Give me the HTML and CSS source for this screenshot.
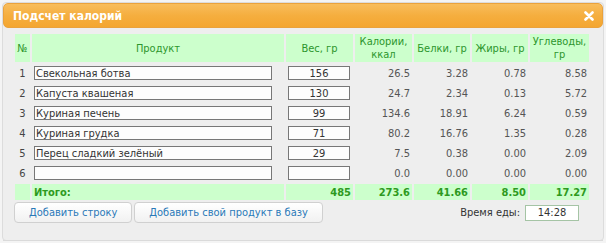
FILE: index.html
```html
<!DOCTYPE html>
<html lang="ru">
<head>
    <meta charset="UTF-8">
    <title>Подсчет калорий</title>
    <link rel="stylesheet" href="styles.css">
</head>
<body>
    <div class="dialog">
        <div class="titlebar">
            <span class="title">Подсчет калорий</span>
            <svg class="close" width="10" height="10" viewBox="0 0 10 10">
                <path d="M1.5 1.5 L8.5 8.5 M8.5 1.5 L1.5 8.5" stroke="#fff" stroke-width="2.6" stroke-linecap="round"/>
            </svg>
        </div>
        <div class="content">
            <table class="calc">
                <colgroup>
                    <col style="width: 15px">
                    <col style="width: 252px">
                    <col style="width: 67px">
                    <col style="width: 57px">
                    <col style="width: 56px">
                    <col style="width: 56px">
                    <col style="width: 59px">
                </colgroup>
                <thead>
                    <tr>
                        <th>№</th>
                        <th>Продукт</th>
                        <th>Вес, гр</th>
                        <th>Калории, ккал</th>
                        <th>Белки, гр</th>
                        <th>Жиры, гр</th>
                        <th>Углеводы, гр</th>
                    </tr>
                </thead>
                <tbody>
                    <tr>
                        <td class="num">1</td>
                        <td class="prod"><input type="text" class="name" value="Свекольная ботва"></td>
                        <td class="wt"><input type="text" class="weight" value="156"></td>
                        <td class="val">26.5</td>
                        <td class="val">3.28</td>
                        <td class="val">0.78</td>
                        <td class="val">8.58</td>
                    </tr>
                    <tr>
                        <td class="num">2</td>
                        <td class="prod"><input type="text" class="name" value="Капуста квашеная"></td>
                        <td class="wt"><input type="text" class="weight" value="130"></td>
                        <td class="val">24.7</td>
                        <td class="val">2.34</td>
                        <td class="val">0.13</td>
                        <td class="val">5.72</td>
                    </tr>
                    <tr>
                        <td class="num">3</td>
                        <td class="prod"><input type="text" class="name" value="Куриная печень"></td>
                        <td class="wt"><input type="text" class="weight" value="99"></td>
                        <td class="val">134.6</td>
                        <td class="val">18.91</td>
                        <td class="val">6.24</td>
                        <td class="val">0.59</td>
                    </tr>
                    <tr>
                        <td class="num">4</td>
                        <td class="prod"><input type="text" class="name" value="Куриная грудка"></td>
                        <td class="wt"><input type="text" class="weight" value="71"></td>
                        <td class="val">80.2</td>
                        <td class="val">16.76</td>
                        <td class="val">1.35</td>
                        <td class="val">0.28</td>
                    </tr>
                    <tr>
                        <td class="num">5</td>
                        <td class="prod"><input type="text" class="name" value="Перец сладкий зелёный"></td>
                        <td class="wt"><input type="text" class="weight" value="29"></td>
                        <td class="val">7.5</td>
                        <td class="val">0.38</td>
                        <td class="val">0.00</td>
                        <td class="val">2.09</td>
                    </tr>
                    <tr>
                        <td class="num">6</td>
                        <td class="prod"><input type="text" class="name" value=""></td>
                        <td class="wt"><input type="text" class="weight" value=""></td>
                        <td class="val">0.0</td>
                        <td class="val">0.00</td>
                        <td class="val">0.00</td>
                        <td class="val">0.00</td>
                    </tr>
                </tbody>
                <tfoot>
                    <tr class="total">
                        <td></td>
                        <td class="label">Итого:</td>
                        <td class="val">485</td>
                        <td class="val">273.6</td>
                        <td class="val">41.66</td>
                        <td class="val">8.50</td>
                        <td class="val">17.27</td>
                    </tr>
                </tfoot>
            </table>
            <div class="actions">
                <button type="button" class="btn">Добавить строку</button>
                <button type="button" class="btn">Добавить свой продукт в базу</button>
                <div class="meal-time">
                    <label for="mealTime">Время еды:</label>
                    <input type="text" id="mealTime" value="14:28">
                </div>
            </div>
        </div>
    </div>
</body>
</html>
```

FILE: styles.css
```css
body {
    margin: 0;
    background-color: #f4f4f4;
    font-family: "DejaVu Sans Condensed", "DejaVu Sans", sans-serif;
    font-size: 11px;
    color: #333;
}
.dialog {
    margin: 2px;
    width: 600px;
    height: 237px;
    border: 1px solid #dcdcdc;
    border-radius: 4px;
    background: #eeeeee;
}
.titlebar {
    display: flex;
    align-items: center;
    justify-content: space-between;
    height: 23px;
    padding: 0 8px 0 9px;
    border: 1px solid #eaa23c;
    border-radius: 5px;
    background: linear-gradient(#f8bd5c, #f5ae3f 50%, #f4a630);
}
.title {
    color: #fff;
    font-weight: bold;
    font-size: 12px;
}
.close {
    display: block;
}
.content {
    padding: 4px 10px 0 10px;
    height: 208px;
    border-bottom: 1px solid #dadada;
}
.calc {
    table-layout: fixed;
    width: 578px;
    border-collapse: separate;
    border-spacing: 2px;
}
.calc th {
    height: 28px;
    padding: 0;
    background: #ccffcc;
    color: #2c962c;
    font-weight: normal;
    line-height: 13px;
    text-align: center;
    vertical-align: middle;
}
.calc td {
    height: 18px;
    padding: 0;
    vertical-align: middle;
}
.num {
    text-align: center;
    color: #444;
}
.calc .prod,
.calc .wt {
    padding-left: 2px;
}
.name, .weight {
    display: block;
    box-sizing: border-box;
    height: 14px;
    margin: 0;
    padding: 0 1px;
    border: 1px solid #777;
    background: #fdfdfd;
    font-family: inherit;
    font-size: 11px;
    line-height: 12px;
    color: #333;
}
.name {
    width: 238px;
}
.weight {
    width: 62px;
    text-align: center;
}
.calc .val {
    text-align: right;
    padding-right: 2px;
    color: #555;
}
.total td {
    height: 16px;
    background: #ccffcc;
    font-weight: bold;
}
.calc .total td,
.calc .total .val {
    color: #2e9a1e;
}
.calc .total .label {
    padding-left: 2px;
}
.actions {
    display: flex;
    align-items: center;
}
.btn {
    height: 21px;
    padding: 0 14px;
    margin-right: 2px;
    border: 1px solid #d0d0d0;
    border-radius: 4px;
    background: linear-gradient(#ffffff, #f1f1f1);
    color: #2a79b8;
    font-family: inherit;
    font-size: 11px;
    white-space: nowrap;
}
.btn:first-child {
    margin-left: 1px;
}
.meal-time {
    margin-left: auto;
    margin-right: 14px;
    display: flex;
    align-items: center;
}
.meal-time label {
    margin-right: 5px;
    color: #333;
}
#mealTime {
    box-sizing: border-box;
    width: 54px;
    height: 16px;
    padding: 0;
    border: 1px solid #a5c4a5;
    background: #fff;
    font-family: inherit;
    font-size: 11px;
    text-align: center;
    color: #333;
}
```
